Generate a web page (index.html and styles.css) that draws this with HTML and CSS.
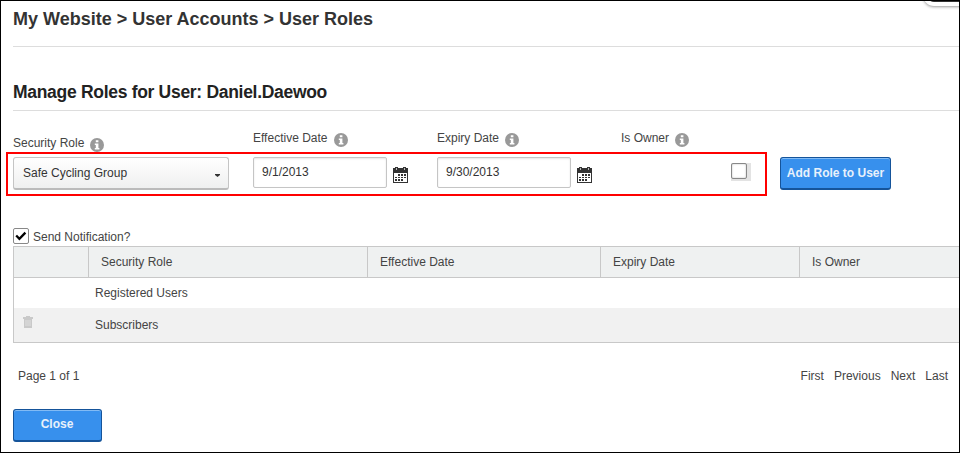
FILE: index.html
```html
<!DOCTYPE html>
<html lang="en">
<head>
<meta charset="utf-8">
<title>User Roles</title>
<link rel="stylesheet" href="styles.css">
</head>
<body>
<svg width="0" height="0" class="defs">
  <symbol id="info" viewBox="0 0 14 14">
    <circle cx="7" cy="7" r="7" fill="#999"/>
    <path d="M5.8 2.2h2.6v2H5.8zM4.8 5.4h3.6v4.5h1v1.6H4.8V9.9h1V7h-1z" fill="#fff"/>
  </symbol>
  <symbol id="calendar" viewBox="0 0 15 16">
    <path d="M0 1h2V0h3v1h5V0h3v1h2v15H0z" fill="#333"/>
    <path d="M1 6h13v9H1z" fill="#fff"/>
    <path d="M3 1h1v2H3zM11 1h1v2h-1z" fill="#bbb"/>
    <path d="M5 7h2v2H5zM8 7h2v2H8zM11 7h2v2h-2zM2 10h2v1H2zM5 10h2v1H5zM8 10h2v1H8zM11 10h2v1h-2zM2 12h2v2H2zM5 12h2v2H5zM8 12h2v2H8z" fill="#333"/>
  </symbol>
</svg>
<div class="page">
  <div class="panel-corner"></div>
  <h1>My Website &gt; User Accounts &gt; User Roles</h1>
  <h2>Manage Roles for User: Daniel.Daewoo</h2>
  <div class="form">
    <div class="highlight"></div>
    <div class="field role">
      <label>Security Role <svg class="info"><use href="#info"/></svg></label>
      <div class="select"><span>Safe Cycling Group</span><i class="caret"></i></div>
    </div>
    <div class="field date effective">
      <label>Effective Date <svg class="info"><use href="#info"/></svg></label>
      <div class="row"><div class="input">9/1/2013</div><svg class="cal"><use href="#calendar"/></svg></div>
    </div>
    <div class="field date">
      <label>Expiry Date <svg class="info"><use href="#info"/></svg></label>
      <div class="row"><div class="input">9/30/2013</div><svg class="cal"><use href="#calendar"/></svg></div>
    </div>
    <div class="field owner">
      <label>Is Owner <svg class="info"><use href="#info"/></svg></label>
      <div class="check-bg"><div class="check"></div></div>
    </div>
    <div class="button add">Add Role to User</div>
  </div>
  <div class="notify">
    <div class="tick"><svg viewBox="0 0 14 14"><path d="M2.2 6.5L5.4 9.8L11.4 3.6" fill="none" stroke="#000" stroke-width="2.3"/></svg></div>
    <span>Send Notification?</span>
  </div>
  <div class="grid">
    <div class="head"><div></div><div>Security Role</div><div>Effective Date</div><div>Expiry Date</div><div>Is Owner</div></div>
    <div class="line"><div></div><div>Registered Users</div></div>
    <div class="line alt"><div><svg class="trash" viewBox="0 0 10 12"><path d="M0 1h3V0h4v1h3v2H0zM1 3h8v9H1z" fill="#c9c9c9"/><path d="M3 4v6M5 4v6M7 4v6" stroke="#e6e6e6" stroke-width=".8"/></svg></div><div>Subscribers</div></div>
  </div>
  <div class="pager"><span>Page 1 of 1</span><div class="links"><span>First</span><span>Previous</span><span>Next</span><span>Last</span></div></div>
  <div class="button close">Close</div>
</div>
</body>
</html>
```
FILE: styles.css
```css
* { box-sizing: border-box; }
body { margin: 0; background: #fff; font: 12px/16px "Liberation Sans", Arial, sans-serif; color: #444; }
.defs { position: absolute; }
.page { position: relative; width: 960px; height: 453px; border: 1px solid #000; padding-left: 12px; overflow: hidden; }
.panel-corner { position: absolute; right: -20px; top: -17px; width: 56px; height: 22px; border: 4px solid #fff; border-radius: 11px; background: #333; box-shadow: 0 1px 3px #999; }
h1, h2 { margin: 0; border-bottom: 1px solid #ddd; white-space: nowrap; }
h1 { height: 46px; padding-top: 7px; font-size: 18px; line-height: 22px; color: #333; }
h2 { height: 64px; padding-top: 34px; font-size: 17.5px; line-height: 22px; letter-spacing: -0.3px; color: #222; }
.form { position: relative; display: flex; height: 116px; padding-top: 19px; }
.highlight { position: absolute; left: -7px; top: 41px; width: 761px; height: 44px; border: 2px solid #f00; }
.field label { display: flex; align-items: flex-start; height: 27px; white-space: nowrap; }
.info { width: 14px; height: 14px; margin: 3px 0 0 6px; }
.effective .info { margin-left: 7px; }
.role { width: 240px; }
.role label { padding-top: 5px; }
.date { width: 184px; }
.owner { width: 159px; }
.select { display: flex; justify-content: space-between; width: 216px; height: 33px; padding: 7px 8px 0 9px; border: 1px solid #c5c5c5; border-bottom: 2px solid #bbb; border-radius: 3px; background: linear-gradient(#fff, #eff0f0); color: #333; }
.caret { margin-top: 9px; width: 5px; height: 3px; background: #333; clip-path: polygon(0 0, 100% 0, 100% 33%, 50% 100%, 0 33%); }
.row { display: flex; }
.input { width: 134px; height: 31px; padding: 6px 8px; border: 1px solid #c5c5c5; border-radius: 2px; box-shadow: inset 0 1px 2px #e5e5e5; color: #333; }
.cal { width: 15px; height: 16px; margin: 10px 0 0 6px; }
.check-bg { width: 20px; height: 18px; margin: 6px 0 0 110px; background: #e3e3e3; }
.check { width: 16px; height: 16px; border: 1px solid #888; border-radius: 2px; background: #fff; box-shadow: inset 0 0 2px #bbb; }
.button { border: 1px solid #15549a; border-bottom-width: 2px; border-radius: 3px; background: #3790ed; box-shadow: inset 0 1px #82bbf5; color: #e8f1fb; font-weight: bold; text-align: center; white-space: nowrap; }
.add { width: 111px; height: 33px; margin-top: 27px; padding-top: 7px; }
.notify { display: flex; height: 19px; }
.notify span { padding-top: 2px; }
.tick { width: 16px; height: 16px; margin: 1px 4px 0 0; border: 1px solid #888; border-radius: 2px; }
.tick svg { display: block; width: 14px; height: 14px; }
.grid { border: 1px solid #c8c8c8; border-right: 0; height: 97px; }
.head { display: grid; grid-template-columns: 74px 279px 233px 199px 1fr; height: 31px; background: #eff1f1; border-bottom: 1px solid #c8c8c8; }
.head div { padding: 7px 0 0 12px; border-left: 1px solid #c8c8c8; }
.head div:first-child { border: 0; }
.line { display: grid; grid-template-columns: 81px 1fr; height: 30px; padding-top: 7px; }
.alt { height: 34px; background: #f1f1f1; padding-top: 9px; }
.trash { display: block; width: 10px; height: 12px; margin: -1px 0 0 9px; }
.pager { display: flex; justify-content: space-between; padding: 25px 11px 0 5px; height: 66px; }
.links { display: flex; gap: 10px; }
.close { width: 89px; height: 33px; padding: 6px 1px 0 0; }
```
